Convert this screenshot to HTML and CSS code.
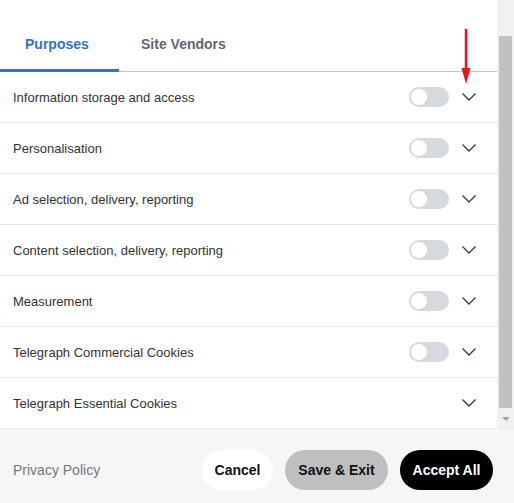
FILE: index.html
```html
<!DOCTYPE html>
<html>
    <head>
        <title>Privacy Settings</title>
        <link rel="stylesheet" href="styles.css">
    </head>
    <body>
        <div class="main">
            <!-- Scrolling list of purposes -->
            <div class="content">
                <div class="tabs">
                    <div class="tab active">Purposes</div>
                    <div class="tab second">Site Vendors</div>
                </div>

                <div class="row">
                    <span class="label">Information storage and access</span>
                    <span class="toggle"><span class="knob"></span></span>
                    <svg class="chevron" width="16" height="10" viewBox="0 0 16 10"><path d="M1.5 1.5 L8 8 L14.5 1.5" /></svg>
                </div>
                <div class="row">
                    <span class="label">Personalisation</span>
                    <span class="toggle"><span class="knob"></span></span>
                    <svg class="chevron" width="16" height="10" viewBox="0 0 16 10"><path d="M1.5 1.5 L8 8 L14.5 1.5" /></svg>
                </div>
                <div class="row">
                    <span class="label">Ad selection, delivery, reporting</span>
                    <span class="toggle"><span class="knob"></span></span>
                    <svg class="chevron" width="16" height="10" viewBox="0 0 16 10"><path d="M1.5 1.5 L8 8 L14.5 1.5" /></svg>
                </div>
                <div class="row">
                    <span class="label">Content selection, delivery, reporting</span>
                    <span class="toggle"><span class="knob"></span></span>
                    <svg class="chevron" width="16" height="10" viewBox="0 0 16 10"><path d="M1.5 1.5 L8 8 L14.5 1.5" /></svg>
                </div>
                <div class="row">
                    <span class="label">Measurement</span>
                    <span class="toggle"><span class="knob"></span></span>
                    <svg class="chevron" width="16" height="10" viewBox="0 0 16 10"><path d="M1.5 1.5 L8 8 L14.5 1.5" /></svg>
                </div>
                <div class="row">
                    <span class="label">Telegraph Commercial Cookies</span>
                    <span class="toggle"><span class="knob"></span></span>
                    <svg class="chevron" width="16" height="10" viewBox="0 0 16 10"><path d="M1.5 1.5 L8 8 L14.5 1.5" /></svg>
                </div>
                <div class="row last">
                    <span class="label">Telegraph Essential Cookies</span>
                    <svg class="chevron" width="16" height="10" viewBox="0 0 16 10"><path d="M1.5 1.5 L8 8 L14.5 1.5" /></svg>
                </div>

                <!-- red annotation arrow -->
                <svg class="arrow" width="12" height="58" viewBox="0 0 12 58">
                    <line x1="6" y1="1" x2="6" y2="44" stroke="#e8141b" stroke-width="2.5" />
                    <polygon points="1.5,40 10.5,40 6,56" fill="#e8141b" />
                </svg>
            </div>

            <!-- Fake scrollbar -->
            <div class="scrollbar">
                <div class="thumb"></div>
                <div class="down"></div>
            </div>
        </div>

        <!-- Footer with actions -->
        <div class="footer">
            <span class="policy">Privacy Policy</span>
            <button class="btn cancel">Cancel</button>
            <button class="btn save">Save &amp; Exit</button>
            <button class="btn accept">Accept All</button>
        </div>
    </body>
</html>
```

FILE: styles.css
```css
/* Page layout */
body {
margin: 0;
padding: 0;
font-family: "Liberation Sans", Arial, sans-serif;
background-color: #fff;
width: 514px;
height: 503px;
overflow: hidden;
}

.main {
display: flex;
height: 428px;
}

.content {
position: relative;
width: 497px;
}

/* Tabs */
.tabs {
display: flex;
border-bottom: 1px solid #c4c4c4;
}

.tab {
position: relative;
padding: 37px 0 19px;
font-size: 14px;
line-height: 15px;
font-weight: bold;
color: #5f6670;
}

.tab.active {
width: 119px;
padding-left: 25px;
box-sizing: border-box;
color: #2f72d2;
}

.tab.active::after {
content: "";
position: absolute;
left: 0;
right: 0;
bottom: -1px;
height: 3px;
background-color: #2f72d2;
}

.tab.second {
padding-left: 22px;
}

/* Purpose rows */
.row {
display: flex;
align-items: center;
height: 50px;
padding: 0 20px 0 13px;
border-bottom: 1px solid #e6e6e6;
}

.row.last {
border-bottom: none;
}

.label {
flex: 1;
font-size: 13px;
color: #333;
}

.toggle {
display: flex;
align-items: center;
width: 40px;
height: 20px;
border-radius: 10px;
background-color: #d6d9dd;
padding: 2px;
box-sizing: border-box;
}

.knob {
width: 16px;
height: 16px;
border-radius: 50%;
background-color: #fff;
}

.chevron {
margin-left: 12px;
}

.chevron path {
fill: none;
stroke: #2d3a4c;
stroke-width: 1.3;
}

.arrow {
position: absolute;
left: 460px;
top: 28px;
}

/* Scrollbar */
.scrollbar {
position: relative;
width: 17px;
background-color: #f1f1f1;
}

.thumb {
position: absolute;
left: 2px;
right: 2px;
top: 36px;
height: 372px;
background-color: #c1c1c1;
}

.down {
position: absolute;
left: 5px;
top: 417px;
border-left: 4px solid transparent;
border-right: 4px solid transparent;
border-top: 4px solid #a3a3a3;
}

/* Footer */
.footer {
display: flex;
align-items: center;
height: 75px;
padding: 7px 21px 0 13px;
background-color: #f5f6f8;
border-top: 1px solid #ececec;
box-sizing: border-box;
}

.policy {
flex: 1;
font-size: 14px;
color: #777;
}

.btn {
height: 40px;
border: none;
border-radius: 20px;
font-family: "Liberation Sans", Arial, sans-serif;
font-size: 14px;
font-weight: bold;
padding: 0 18px;
margin-left: 12px;
}

.cancel {
background-color: #fff;
color: #111;
width: 71px;
padding: 0;
}

.save {
background-color: #bfbfbf;
color: #111;
width: 103px;
padding: 0;
}

.accept {
background-color: #000;
color: #fff;
width: 93px;
padding: 0;
}
```
